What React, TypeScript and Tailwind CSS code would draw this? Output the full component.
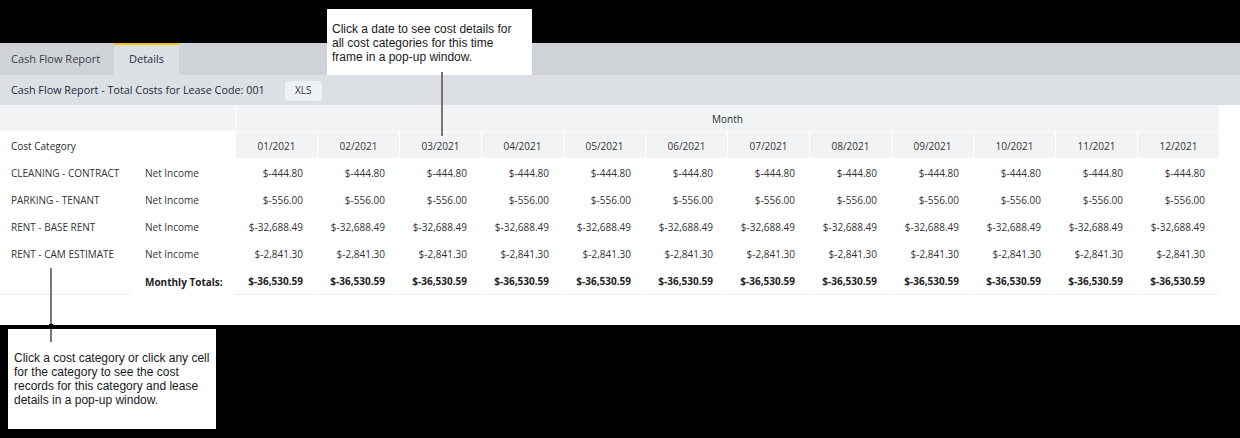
const months = ["01/2021", "02/2021", "03/2021", "04/2021", "05/2021", "06/2021", "07/2021", "08/2021", "09/2021", "10/2021", "11/2021", "12/2021"]

const rows = [
  { category: "CLEANING - CONTRACT", type: "Net Income", value: "$-444.80" },
  { category: "PARKING - TENANT", type: "Net Income", value: "$-556.00" },
  { category: "RENT - BASE RENT", type: "Net Income", value: "$-32,688.49" },
  { category: "RENT - CAM ESTIMATE", type: "Net Income", value: "$-2,841.30" },
]

const total = "$-36,530.59"

export default function App() {
  return (
    <div className="relative h-[438px] w-[1240px] overflow-hidden bg-black font-['Open_Sans',sans-serif]">
      <div className="pt-[43px]">
        {/* Tabs */}
        <div className="flex h-[32px] bg-[#cfd3d7] text-[11px]">
          <div className="flex w-[114px] items-center pl-[11px] text-[#3b4047]">Cash Flow Report</div>
          <div className="flex w-[65px] items-center justify-center border-t-2 border-[#f5c400] bg-[#dcdfe3] pb-[2px] text-[#1f2d45]">
            Details
          </div>
        </div>

        {/* Report header */}
        <div className="flex h-[30px] items-center bg-[#dcdfe3] pl-[11px] text-[10.8px] text-[#1e2a3b]">
          <span>Cash Flow Report - Total Costs for Lease Code: 001</span>
          <button
            type="button"
            className="ml-[20px] mt-[1px] flex h-[20px] w-[37px] items-center justify-center rounded-[3px] bg-[#f0f1f3] text-[10px] text-[#2a3445]"
          >
            XLS
          </button>
        </div>

        {/* Table */}
        <div className="h-[220px] bg-white text-[10px] text-[#333]">
          <div className="grid grid-cols-[130px_105px_repeat(12,82px)]">
            <div className="col-span-2 h-[27px] border-b border-white bg-[#f2f3f5]" />
            <div className="col-span-12 flex h-[27px] items-center justify-center border-b border-l border-white bg-[#f2f3f5] pt-[2px] font-medium text-[#2b2b2b]">
              Month
            </div>

            <div className="col-span-2 flex h-[27px] items-center pl-[11px] pt-[2px] font-medium text-[#2b2b2b]">
              Cost Category
            </div>
            {months.map((m) => (
              <div
                key={m}
                className="flex h-[27px] items-center justify-center border-b border-l border-white bg-[#f2f3f5] pt-[2px] text-[#333]"
              >
                {m}
              </div>
            ))}

            {rows.map((r) => (
              <div key={r.category} className="contents">
                <div className="flex h-[27px] items-center whitespace-nowrap pl-[11px] pt-[2px]">{r.category}</div>
                <div className="flex h-[27px] items-center pl-[15px] pt-[2px]">{r.type}</div>
                {months.map((m) => (
                  <div key={m} className="flex h-[27px] items-center justify-end pr-[14px] pt-[2px]">
                    {r.value}
                  </div>
                ))}
              </div>
            ))}

            <div className="h-[28px] border-b border-[#ebebeb]" />
            <div className="flex h-[28px] items-center pl-[15px] pt-[2px] font-bold text-[#222]">Monthly Totals:</div>
            {months.map((m) => (
              <div
                key={m}
                className="flex h-[28px] items-center justify-end border-b border-l border-b-[#ebebeb] border-l-white pr-[14px] pt-[2px] font-bold text-[#222]"
              >
                {total}
              </div>
            ))}
          </div>
        </div>
      </div>

      {/* Callout: dates */}
      <div className="absolute left-[327px] top-[9px] h-[66px] w-[205px] bg-white pl-[5px] pt-[13px] font-['Liberation_Sans',Arial,sans-serif] text-[12px] leading-[14px] text-[#1a1a1a]">
        Click a date to see cost details for
        <br />
        all cost categories for this time
        <br />
        frame in a pop-up window.
      </div>
      <div className="absolute left-[441px] top-[72px] h-[64px] w-[2px] bg-[#777]" />

      {/* Callout: categories */}
      <div className="absolute left-[8px] top-[329px] h-[100px] w-[208px] bg-white pl-[6px] pt-[22px] font-['Liberation_Sans',Arial,sans-serif] text-[12px] leading-[14px] text-[#1a1a1a]">
        Click a cost category or click any cell
        <br />
        for the category to see the cost
        <br />
        records for this category and lease
        <br />
        details in a pop-up window.
      </div>
      <div className="absolute left-[50px] top-[268px] h-[74px] w-[2px] bg-[#777]" />
      <div className="absolute left-[49px] top-[324px] h-[5px] w-[4px] bg-black" />
    </div>
  )
}
